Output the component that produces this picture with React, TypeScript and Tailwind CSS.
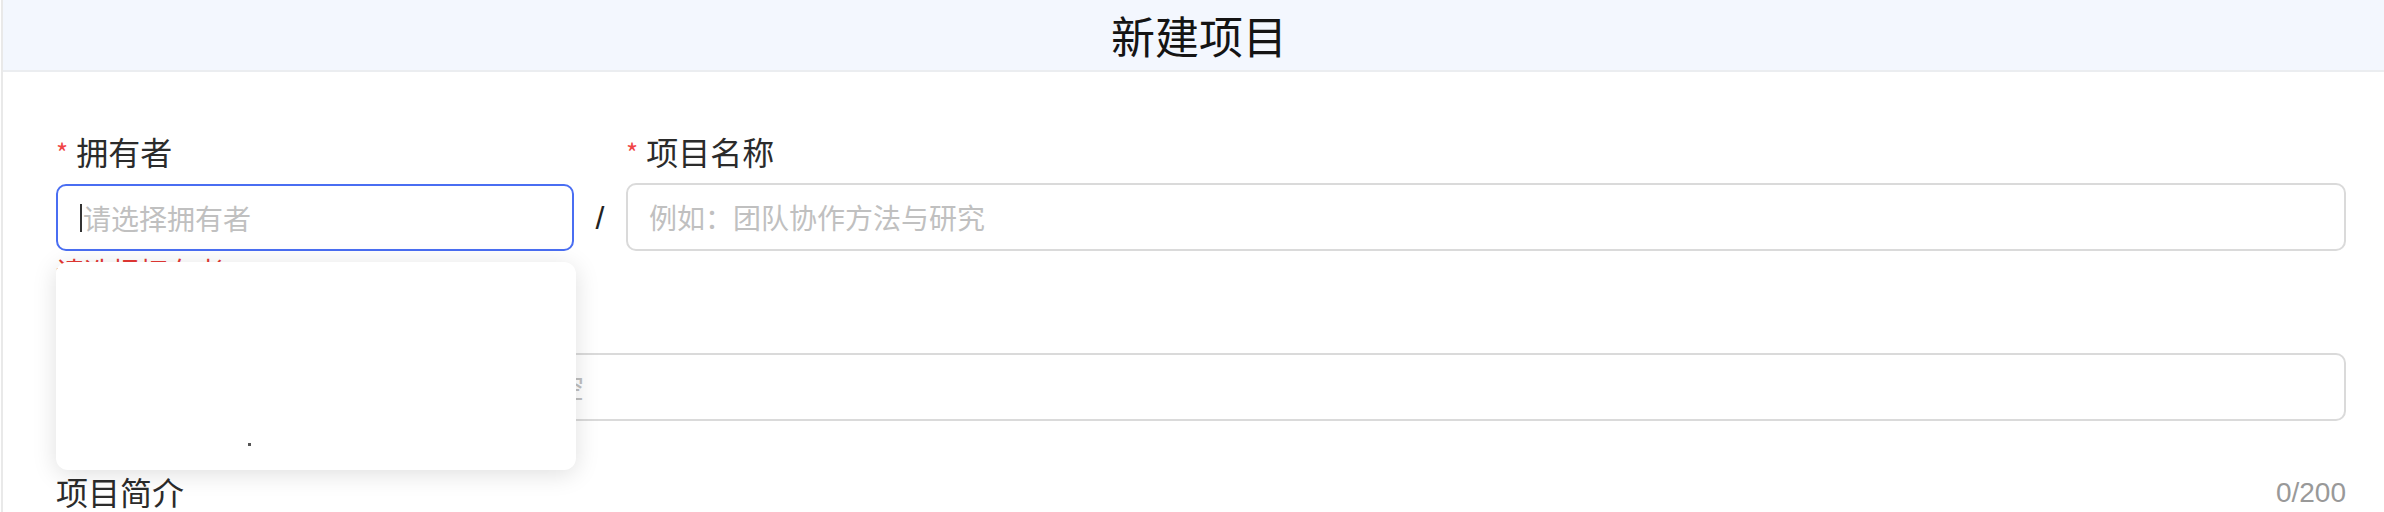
import React from "react";

const cjk = { fontFamily: '"Noto Sans CJK SC", "Noto Sans", sans-serif' };

function Label({ text, required }: { text: string; required?: boolean }) {
    return (
        <div className="flex items-center h-[44px] leading-[44px] text-[32px] text-[#2b2b2b]">
            {required && <span className="text-[26px] text-[#f04545] mr-[8px] mt-[2px]">*</span>}
            <span>{text}</span>
        </div>
    );
}

export default function App() {
    return (
        <div className="w-[2384px] h-[512px] overflow-hidden bg-white flex" style={cjk}>
            <div className="w-[2px] ml-[1px] bg-[#e9e9e9]" />
            <div className="flex-1 flex flex-col">
                {/* header */}
                <div className="h-[72px] shrink-0 flex items-center justify-center bg-[#f3f7fe] border-b-2 border-[#ebedf0]">
                    <h1 className="text-[44px] leading-none text-[#141414] ml-[11px]">新建项目</h1>
                </div>

                <div className="pl-[53px] pr-[38px] pt-[57px]">
                    {/* owner / name */}
                    <div className="flex items-start">
                        <div className="w-[518px] shrink-0">
                            <Label text="拥有者" required />
                            <div className="relative mt-[11px]">
                                <div className="h-[67px] rounded-[10px] border-2 border-[#4a6ef2] flex items-center pl-[22px] text-[28px] text-[#c0c0c0]">
                                    <span className="w-[2px] h-[28px] bg-[#333] mr-[1px]" />
                                    <span>请选择拥有者</span>
                                </div>
                                {/* dropdown */}
                                <div className="absolute left-0 top-[calc(100%+11px)] z-10 w-[520px] h-[208px] rounded-[12px] bg-white shadow-[0_4px_24px_rgba(0,0,0,0.13)] pl-[192px] pt-[181px]">
                                    <div className="w-[3px] h-[3px] bg-[#555]" />
                                </div>
                            </div>
                            <div className="h-[40px] leading-[40px] text-[28px] text-[#e53935]">请选择拥有者</div>
                        </div>
                        <div className="w-[52px] shrink-0 pt-[55px] h-[122px] flex items-center justify-center text-[32px] text-[#222]" style={{ fontFamily: '"Liberation Sans", sans-serif' }}>
                            /
                        </div>
                        <div className="flex-1">
                            <Label text="项目名称" required />
                            <div className="mt-[10px] h-[68px] rounded-[10px] border-2 border-[#dadada] flex items-center pl-[21px] text-[28px] text-[#c0c0c0]">
                                例如：团队协作方法与研究
                            </div>
                        </div>
                    </div>

                    {/* path */}
                    <div className="mt-[7px]">
                        <Label text="项目路径" required />
                        <div className="mt-[11px] h-[68px] rounded-[10px] border-2 border-[#dadada] flex items-center pl-[22px] text-[28px] text-[#c0c0c0]">
                            填写项目路径，用于访问地址，不能为空
                        </div>
                    </div>

                    {/* description */}
                    <div className="mt-[48px] flex items-end justify-between h-[44px]">
                        <div className="h-[44px] leading-[44px] text-[32px] text-[#2b2b2b]">项目简介</div>
                        <div className="text-[28px] leading-[40px] text-[#999]" style={{ fontFamily: '"Liberation Sans", sans-serif' }}>
                            0/200
                        </div>
                    </div>
                </div>
            </div>
        </div>
    );
}
